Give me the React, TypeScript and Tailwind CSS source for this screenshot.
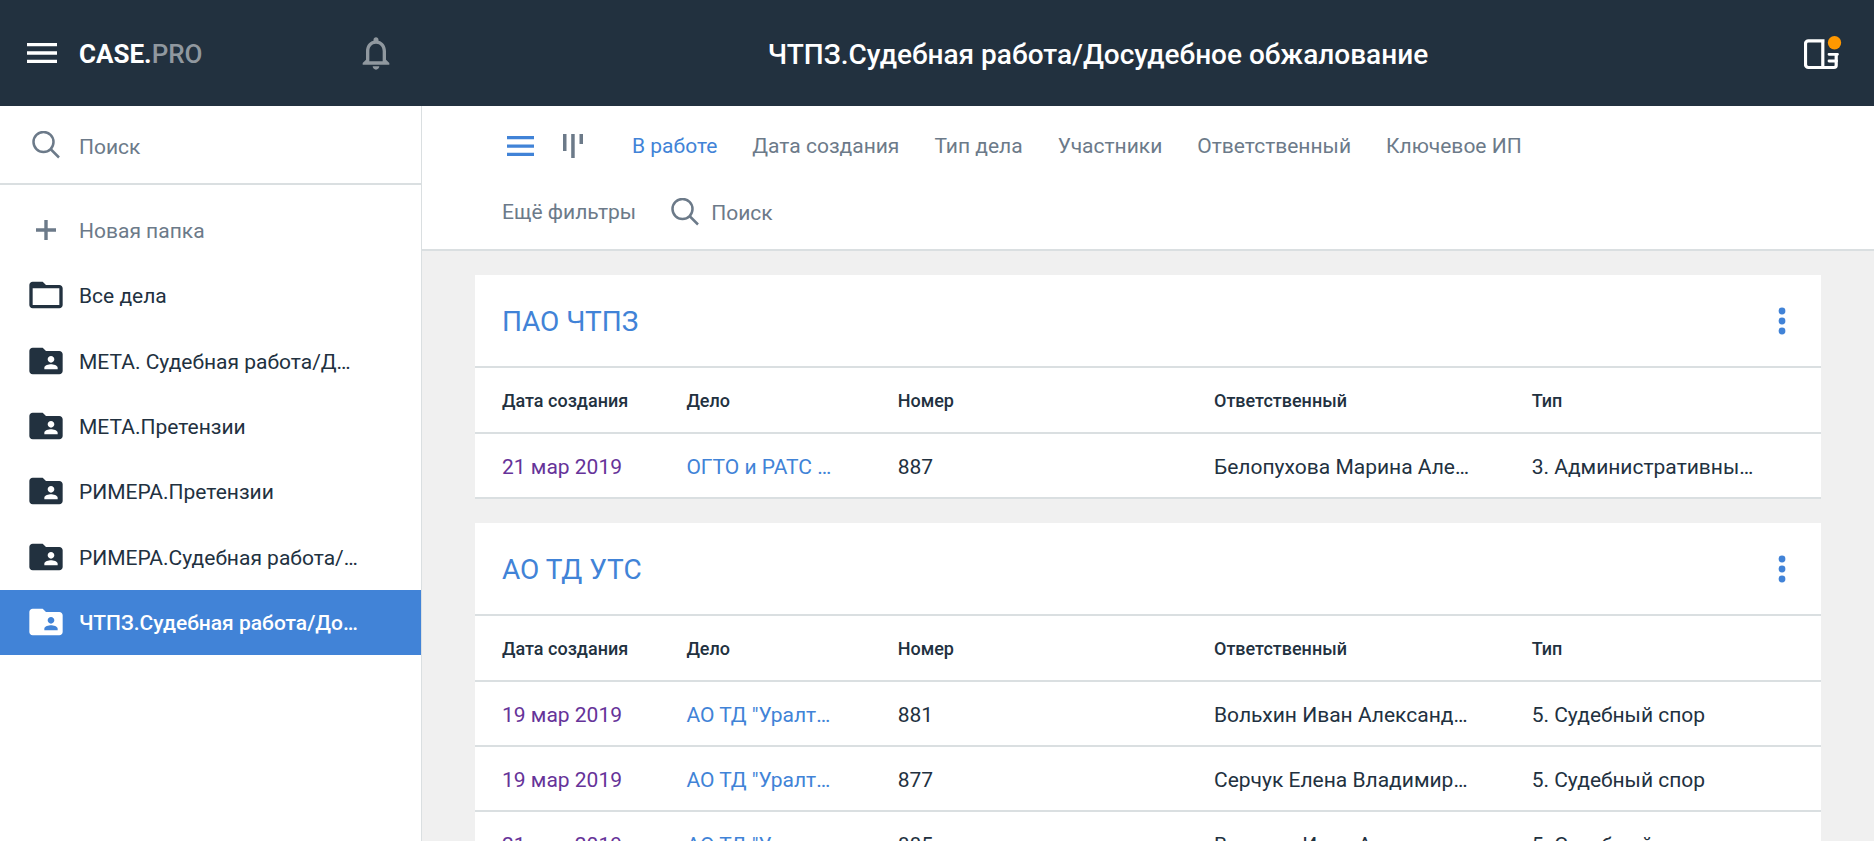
import type { ReactNode } from "react"
import { MdFolderOpen, MdFolderShared, MdMenu, MdNotificationsNone } from "react-icons/md"

type CaseRow = {
  date: string
  title: string
  number: string
  owner: string
  type: string
}

type CaseGroup = {
  name: string
  rows: CaseRow[]
}

const folders = [
  "МЕТА. Судебная работа/Д…",
  "МЕТА.Претензии",
  "РИМЕРА.Претензии",
  "РИМЕРА.Судебная работа/…",
  "ЧТПЗ.Судебная работа/До…",
]

const activeFolder = "ЧТПЗ.Судебная работа/До…"

const filters = [
  "В работе",
  "Дата создания",
  "Тип дела",
  "Участники",
  "Ответственный",
  "Ключевое ИП",
  "Ещё фильтры",
]

const columns = ["Дата создания", "Дело", "Номер", "Ответственный", "Тип"]

const groups: CaseGroup[] = [
  {
    name: "ПАО ЧТПЗ",
    rows: [
      {
        date: "21 мар 2019",
        title: "ОГТО и РАТС …",
        number: "887",
        owner: "Белопухова Марина Але…",
        type: "3. Административны…",
      },
    ],
  },
  {
    name: "АО ТД УТС",
    rows: [
      {
        date: "19 мар 2019",
        title: 'АО ТД "Уралт…',
        number: "881",
        owner: "Вольхин Иван Александ…",
        type: "5. Судебный спор",
      },
      {
        date: "19 мар 2019",
        title: 'АО ТД "Уралт…',
        number: "877",
        owner: "Серчук Елена Владимир…",
        type: "5. Судебный спор",
      },
      {
        date: "21 мар 2019",
        title: 'АО ТД "Уралт…',
        number: "885",
        owner: "Вольхин Иван Александ…",
        type: "5. Судебный спор",
      },
    ],
  },
]

const SearchIcon = () => (
  <svg width="28" height="28" viewBox="0 0 28 28" fill="none" stroke="currentColor" strokeWidth="2.5" className="shrink-0">
    <circle cx="11.5" cy="11" r="10" />
    <path d="M18.5 18 27 26.500" />
  </svg>
)

const PlusIcon = () => (
  <svg width="20" height="20" viewBox="0 0 20 20" stroke="currentColor" strokeWidth="3.4">
    <path d="M10 0v20M0 10h20" />
  </svg>
)

const ListIcon = () => (
  <svg width="27" height="20" viewBox="0 0 27 20" fill="currentColor">
    <path d="M0 0h27v3.3H0zM0 8.400h27v3.3H0zM0 16.700h27V20H0z" />
  </svg>
)

const BoardIcon = () => (
  <svg width="20" height="24" viewBox="0 0 20 24" fill="currentColor">
    <path d="M0 0h3.5v17H0zM8.2 0h3.5v24H8.2zM16.5 0H20v10h-3.5z" />
  </svg>
)

const PanelIcon = () => (
  <svg width="38" height="34" viewBox="0 0 38 34" fill="none">
    <path
      d="M20.5 4.800H4.500a3 3 0 0 0-3 3v20.700a3 3 0 0 0 3 3H30a2.200 2.200 0 0 0 2.200-2.200V18.300M18.800 4.800v26.700"
      stroke="#fff"
      strokeWidth="3.2"
    />
    <path d="M25 18.300h8.500M25 25h7.500" stroke="#fff" strokeWidth="2.800" strokeLinecap="round" />
    <circle cx="30.5" cy="6.700" r="6.700" fill="#ff9800" />
  </svg>
)

const KebabIcon = () => (
  <svg width="8" height="28" viewBox="0 0 8 28" fill="currentColor">
    <circle cx="4" cy="4" r="3.4" />
    <circle cx="4" cy="14" r="3.4" />
    <circle cx="4" cy="24" r="3.4" />
  </svg>
)

type FolderItemProps = {
  icon: ReactNode
  label: string
  active?: boolean
  muted?: boolean
}

const FolderItem = ({ icon, label, active, muted }: FolderItemProps) => {
  const color = active
    ? "bg-[#4183d7] text-white font-medium"
    : muted
      ? "text-[#6c7a89]"
      : "text-[#22313f]"

  return (
    <li className="flex">
      <button className={`flex w-full min-w-0 items-center gap-[13px] pl-[26px] pr-12 text-left ${color}`}>
        <span className="flex w-10 shrink-0 justify-center">{icon}</span>
        <span className="truncate pt-0.5">{label}</span>
      </button>
    </li>
  )
}

const Sidebar = () => (
  <aside className="w-[422px] shrink-0 border-r border-[#dadfe1] bg-white">
    <label className="flex h-[79px] items-center gap-[13px] border-b-2 border-[#dadfe1] pl-[26px] text-[#6c7a89]">
      <span className="flex w-10 shrink-0 justify-center">
        <SearchIcon />
      </span>
      <input
        type="text"
        aria-label="Поиск по папкам"
        placeholder="Поиск"
        className="w-full min-w-0 pt-1 outline-none placeholder:text-[#6c7a89] placeholder:opacity-100"
      />
    </label>
    <ul className="mt-3 grid h-[458px] auto-rows-fr">
      <FolderItem icon={<PlusIcon />} label="Новая папка" muted />
      <FolderItem icon={<MdFolderOpen size={40} />} label="Все дела" />
      {folders.map((name) => (
        <FolderItem
          key={name}
          icon={<MdFolderShared size={40} />}
          label={name}
          active={name === activeFolder}
        />
      ))}
    </ul>
  </aside>
)

const Toolbar = () => (
  <div className="flex flex-wrap items-center gap-x-[35px] border-b-2 border-[#dadfe1] bg-white pt-[7px] pb-1 pl-20 pr-[200px] text-[#6c7a89]">
    <div className="flex h-[66px] items-center gap-[29px] pl-[5px] pr-[14px]">
      <button aria-label="Список" className="text-[#4183d7]">
        <ListIcon />
      </button>
      <button aria-label="Доска">
        <BoardIcon />
      </button>
    </div>
    {filters.map((name, i) => (
      <button key={name} className={i === 0 ? "h-[66px] text-[#4183d7]" : "h-[66px]"}>
        {name}
      </button>
    ))}
    <label className="flex h-[66px] items-center gap-3">
      <SearchIcon />
      <input
        type="text"
        aria-label="Поиск дел"
        placeholder="Поиск"
        className="w-40 pt-0.5 outline-none placeholder:text-[#6c7a89] placeholder:opacity-100"
      />
    </label>
  </div>
)

const GroupCard = ({ name, rows }: CaseGroup) => (
  <section className="bg-white">
    <div className="flex h-[93px] items-center justify-between border-b-2 border-[#dadfe1] pl-[27px] pr-[35px] text-[#4183d7]">
      <h2 className="pt-0.5 text-[28px]">{name}</h2>
      <button aria-label="Действия">
        <KebabIcon />
      </button>
    </div>
    <table className="w-full table-fixed text-left">
      <colgroup>
        <col className="w-[13.7%]" />
        <col className="w-[15.7%]" />
        <col className="w-[23.5%]" />
        <col className="w-[23.6%]" />
        <col className="w-[23.5%]" />
      </colgroup>
      <thead>
        <tr className="h-[65px] border-b-2 border-[#dadfe1] text-lg">
          {columns.map((column) => (
            <th key={column} className="truncate pt-0.5 pl-[27px] font-medium">
              {column}
            </th>
          ))}
        </tr>
      </thead>
      <tbody>
        {rows.map((row) => (
          <tr key={row.number} className="h-[65px] border-b-2 border-[#dadfe1]">
            <td className="truncate pt-0.5 pl-[27px] text-[#663399]">{row.date}</td>
            <td className="truncate pt-0.5 pl-[27px]">
              <a href="#" className="text-[#4183d7]">
                {row.title}
              </a>
            </td>
            <td className="truncate pt-0.5 pl-[27px]">{row.number}</td>
            <td className="truncate pt-0.5 pl-[27px]">{row.owner}</td>
            <td className="truncate pt-0.5 pl-[27px]">{row.type}</td>
          </tr>
        ))}
      </tbody>
    </table>
  </section>
)

const App = () => {
  return (
    <div className="flex h-screen flex-col overflow-hidden bg-[#f0f0f0] font-[Roboto,sans-serif] text-[21px] leading-7 text-[#22313f]">
      <header className="flex h-[106px] shrink-0 items-center bg-[#22313f] text-white">
        <div className="flex w-[422px] shrink-0 items-center pl-[22px] pr-[26px]">
          <button aria-label="Меню">
            <MdMenu size={40} />
          </button>
          <a href="#" className="ml-[17px] pt-0.5 text-[26px] font-bold">
            CASE.<span className="font-medium text-[#90989f]">PRO</span>
          </a>
          <button aria-label="Уведомления" className="ml-auto text-[#90989f]">
            <MdNotificationsNone size={40} />
          </button>
        </div>
        <h1 className="min-w-0 flex-1 truncate pt-1 text-center text-[28px] leading-9 font-medium">
          ЧТПЗ.Судебная работа/Досудебное обжалование
        </h1>
        <div className="flex w-[100px] shrink-0 justify-end pr-8">
          <button aria-label="Панель">
            <PanelIcon />
          </button>
        </div>
      </header>
      <div className="flex min-h-0 flex-1">
        <Sidebar />
        <main className="min-w-0 flex-1 overflow-y-auto [scrollbar-width:none]">
          <Toolbar />
          <div className="flex flex-col gap-6 px-[53px] py-6">
            {groups.map((group) => (
              <GroupCard key={group.name} {...group} />
            ))}
          </div>
        </main>
      </div>
    </div>
  )
}

export default App
